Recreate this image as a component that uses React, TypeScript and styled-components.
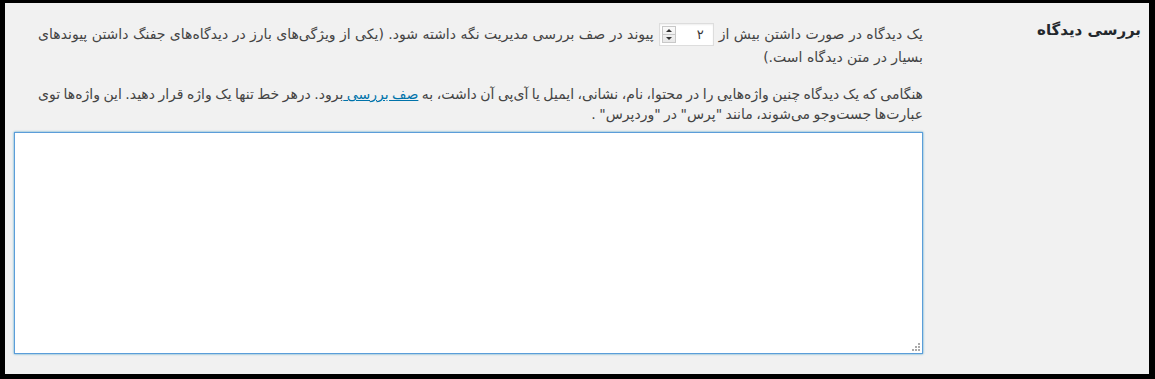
import React from "react";
import styled, { createGlobalStyle } from "styled-components";

const Global = createGlobalStyle`
  html, body { margin: 0; padding: 0; background: #000; }
  body { font-family: "DejaVu Sans", Tahoma, sans-serif; }
`;

const Frame = styled.div`
  width: 1155px;
  height: 379px;
  box-sizing: border-box;
  border-style: solid;
  border-color: #000;
  border-width: 3px 6px 5px 5px;
  background: #f1f1f1;
  overflow: hidden;
`;

const Row = styled.div`
  direction: rtl;
  display: flex;
  align-items: flex-start;
  color: #444;
  font-size: 14px;
`;

const Heading = styled.div`
  width: 211px;
  padding: 16px 8px 0 0;
  font-weight: 700;
  font-size: 15px;
  color: #23282d;
  line-height: 22px;
`;

const Cell = styled.div`
  flex: 1;
  padding: 20px 8px 0 9px;
`;

const Para = styled.p<{ $lh: number; $mb: number; $ws?: number }>`
  margin: 0 0 ${(p) => p.$mb}px 0;
  line-height: ${(p) => p.$lh}px;
  word-spacing: ${(p) => p.$ws ?? 0}px;
`;

const NumField = styled.span`
  display: inline-flex;
  align-items: center;
  vertical-align: middle;
  direction: ltr;
  box-sizing: border-box;
  width: 55px;
  height: 23px;
  margin: -2px 5px 0;
  background: #fff;
  border: 1px solid #ddd;
  box-shadow: inset 0 1px 2px rgba(0, 0, 0, 0.07);
`;

const Spinner = styled.span`
  display: flex;
  flex-direction: column;
  width: 14px;
  height: 17px;
  margin-left: 2px;
  border: 1px solid #c8c8c8;
  box-sizing: border-box;
  background: linear-gradient(#fafafa, #e8e8e8);
`;

const SpinHalf = styled.span<{ $down?: boolean }>`
  flex: 1;
  display: flex;
  align-items: center;
  justify-content: center;
  border-top: ${(p) => (p.$down ? "1px solid #c8c8c8" : "none")};
  &::after {
    content: "";
    border-left: 3px solid transparent;
    border-right: 3px solid transparent;
    ${(p) =>
      p.$down
        ? "border-top: 3px solid #333;"
        : "border-bottom: 3px solid #333;"}
  }
`;

const NumValue = styled.span`
  flex: 1;
  text-align: right;
  padding-right: 9px;
  font-size: 13px;
  line-height: 1;
  color: #333;
`;

const Link = styled.a`
  color: #0073aa;
  text-decoration: underline;
`;

const AreaWrap = styled.div`
  position: relative;
  width: 909px;
`;

const TextArea = styled.textarea`
  display: block;
  box-sizing: border-box;
  width: 909px;
  height: 222px;
  margin: 0;
  background: #fff;
  border: 1px solid #5b9dd9;
  box-shadow: 0 0 2px rgba(30, 140, 190, 0.8);
  outline: none;
  resize: none;
`;

const Grip = styled.svg`
  position: absolute;
  right: 3px;
  bottom: 3px;
  width: 8px;
  height: 8px;
  pointer-events: none;
`;

export default function App() {
  return (
    <>
      <Global />
      <Frame>
        <Row>
          <Heading>بررسی دیدگاه</Heading>
          <Cell>
            <Para $lh={23} $mb={15}>
              یک دیدگاه در صورت داشتن بیش از
              <NumField>
                <Spinner>
                  <SpinHalf />
                  <SpinHalf $down />
                </Spinner>
                <NumValue>۲</NumValue>
              </NumField>
              پیوند در صف بررسی مدیریت نگه داشته شود. (یکی از ویژگی‌های بارز در
              دیدگاه‌های جفنگ داشتن پیوندهای بسیار در متن دیدگاه است.)
            </Para>
            <Para $lh={20} $mb={8} $ws={-1}>
              هنگامی که یک دیدگاه چنین واژه‌هایی را در محتوا، نام، نشانی، ایمیل یا
              آی‌پی آن داشت، به <Link href="#">صف بررسی </Link>برود. درهر خط تنها یک
              واژه قرار دهید. این واژه‌ها توی عبارت‌ها جست‌وجو می‌شوند، مانند "پرس" در
              "وردپرس" .
            </Para>
            <AreaWrap>
              <TextArea />
              <Grip viewBox="0 0 8 8">
                <g fill="#aaa">
                  <rect x="6" y="0" width="2" height="2" />
                  <rect x="3" y="3" width="2" height="2" />
                  <rect x="6" y="3" width="2" height="2" />
                  <rect x="0" y="6" width="2" height="2" />
                  <rect x="3" y="6" width="2" height="2" />
                  <rect x="6" y="6" width="2" height="2" />
                </g>
              </Grip>
            </AreaWrap>
          </Cell>
        </Row>
      </Frame>
    </>
  );
}
